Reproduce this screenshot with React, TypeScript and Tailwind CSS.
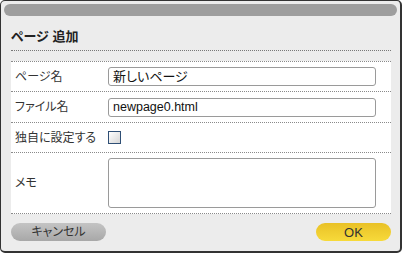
import React from "react";

const font = "font-['Liberation_Sans','Noto_Sans_CJK_JP',sans-serif] [font-feature-settings:'palt']";

function Row({ label, h, children }: { label: string; h: string; children: React.ReactNode }) {
  return (
    <div className={`flex items-center border-b border-dotted border-[#8a8a8a] ${h}`}>
      <div className="w-[97px] pl-[4px] text-[12px] text-[#333] leading-none">{label}</div>
      <div className="flex items-center">{children}</div>
    </div>
  );
}

export default function App() {
  return (
    <div className={`${font} w-[402px] h-[253px] box-border rounded-[5px] border border-r-2 border-b-2 border-[#333] bg-[#ececec] flex flex-col`}>
      <div className="mx-[3px] mt-[3px] h-[12px] rounded-full bg-[#9e9e9e]" />
      <div className="ml-[10px] mr-[9px] h-[35px] border-b border-dotted border-[#777] flex items-end pb-[7px]">
        <span className="text-[13px] font-bold text-[#222] leading-none">ページ 追加</span>
      </div>
      <div className="ml-[10px] mr-[9px] mt-[10px] bg-white border-t border-dotted border-[#8a8a8a]">
        <Row label="ページ名" h="h-[30px]">
          <div className="w-[268px] h-[19px] box-border rounded-[3px] border border-[#9a9a9a] bg-white pl-[4px] flex items-center text-[13px] text-[#111] leading-none">
            新しいページ
          </div>
        </Row>
        <Row label="ファイル名" h="h-[31px]">
          <div className="w-[268px] h-[19px] box-border rounded-[3px] border border-[#9a9a9a] bg-white pl-[4px] flex items-center text-[12.5px] text-[#111] leading-none">
            newpage0.html
          </div>
        </Row>
        <Row label="独自に設定する" h="h-[30px]">
          <div className="w-[13px] h-[13px] box-border border border-[#2f4f75] bg-gradient-to-br from-[#ffffff] to-[#d6d6d6]" />
        </Row>
        <Row label="メモ" h="h-[61px]">
          <div className="w-[268px] h-[50px] box-border rounded-[3px] border border-[#9a9a9a] bg-white" />
        </Row>
      </div>
      <div className="ml-[10px] mr-[9px] mt-[9px] flex justify-between">
        <div className="w-[95px] h-[18px] rounded-full bg-gradient-to-b from-[#c4c4c4] to-[#a8a8a8] flex items-center justify-center text-[12px] text-[#333] leading-none">
          キャンセル
        </div>
        <div className="w-[75px] h-[18px] rounded-full bg-gradient-to-b from-[#e9c126] to-[#f7da3a] flex items-center justify-center text-[13px] text-[#333] leading-none">
          OK
        </div>
      </div>
    </div>
  );
}
